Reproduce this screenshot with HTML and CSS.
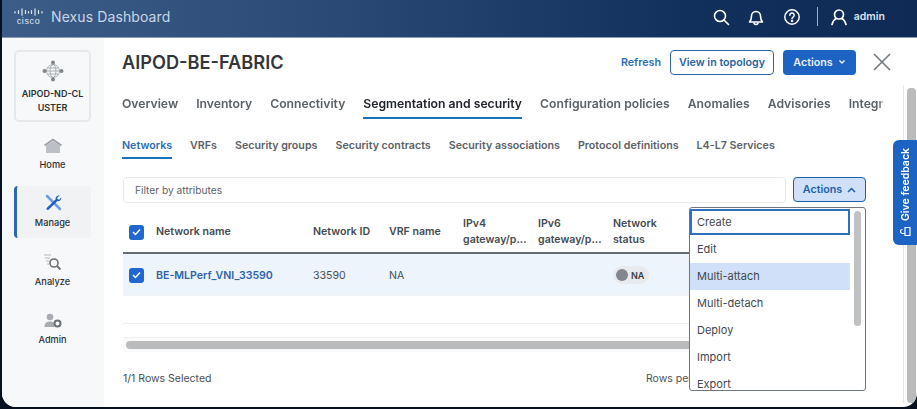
FILE: index.html
```html
<!DOCTYPE html>
<html lang="en">
<head>
<meta charset="utf-8">
<title>Nexus Dashboard</title>
<link rel="stylesheet" href="styles.css">
</head>
<body>
<div class="window">
  <header class="topbar">
    <div class="brand">
      <div class="cisco">
        <svg class="cisco-bars" width="29" height="8" viewBox="0 0 29 8"><g stroke="#dfe8f2" stroke-width="1.200" stroke-linecap="round"><path d="M1 3.500v1.500M4.500 2.500v3M8 .8v6.400M11.500 2.500v3M14.500 3.500v1.500M17.500 2.500v3M21 .8v6.400M24.500 2.500v3M28 3.500v1.500"/></g></svg>
        <span class="cisco-word">cisco</span>
      </div>
      <span class="product">Nexus Dashboard</span>
    </div>
    <div class="top-actions">
      <svg class="ti" width="18" height="18" viewBox="0 0 18 18" fill="none" stroke="#fff" stroke-width="1.600"><circle cx="8" cy="8" r="5.500"/><path d="M12 12l4.500 4.500" stroke-linecap="round"/></svg>
      <svg class="ti" width="18" height="18" viewBox="0 0 18 18" fill="none" stroke="#fff" stroke-width="1.600" stroke-linejoin="round"><path d="M2.500 14h13c-1.500-1.500-2-2.500-2-6a4.500 4.500 0 0 0-9 0c0 3.500-.5 4.500-2 6z"/><path d="M7 14.500a2 2 0 0 0 4 0"/></svg>
      <svg class="ti" width="18" height="18" viewBox="0 0 18 18" fill="none" stroke="#fff" stroke-width="1.500"><circle cx="9" cy="9" r="7.200"/><path d="M6.800 7.200a2.200 2.200 0 1 1 3.300 1.900c-.8.500-1.100.9-1.100 1.700" stroke-linecap="round"/><circle cx="9" cy="12.900" r=".5" fill="#fff"/></svg>
      <span class="divider"></span>
      <svg class="user" width="18" height="18" viewBox="0 0 18 18" fill="none" stroke="#fff" stroke-width="1.700" stroke-linecap="round"><circle cx="9" cy="6.500" r="4.500"/><path d="M2 16.500c.8-3 3-5.500 4.500-6M16 16.500c-.8-3-3-5.500-4.500-6"/></svg>
      <span class="admin">admin</span>
    </div>
  </header>
  <div class="layout">
    <nav class="sidebar">
      <div class="cluster">
        <svg width="22" height="22" viewBox="0 0 22 22" fill="none"><circle cx="11" cy="11" r="6.500" stroke="#9aa0a6" stroke-width=".8"/><ellipse cx="11" cy="11" rx="3" ry="6.500" stroke="#9aa0a6" stroke-width=".8"/><path d="M4.500 11h13M5.500 8h11M5.500 14h11" stroke="#9aa0a6" stroke-width=".8"/><g fill="#7f858b"><circle cx="11" cy="2.500" r="2"/><circle cx="11" cy="19.500" r="2"/><circle cx="2.500" cy="11" r="2"/><circle cx="19.500" cy="11" r="2"/></g></svg>
        <span class="cluster-name">AIPOD-ND-CLUSTER</span>
      </div>
      <a class="nav-item">
        <svg width="20" height="16" viewBox="0 0 20 16"><path d="M3 7.500L10 3l7 4.500V15H3z" fill="#bcc0c4"/><path d="M1.500 7.500L10 1.500l8.500 6" fill="none" stroke="#9a9fa4" stroke-width="1.600"/></svg>
        <span>Home</span>
      </a>
      <a class="nav-item active">
        <svg width="18" height="18" viewBox="0 0 18 18" fill="none"><path d="M3 2l13 13" stroke="#6e9ee0" stroke-width="2.600" stroke-linecap="round"/><path d="M15.500 1.500l-2.500 2.500.8 1.200 1.300.500 2.200-2.300c.3 2-1.500 4.200-3.800 3.700L4.500 15.800c-1 1-2.800-.600-1.800-1.700l9-8.800c-.6-2.300 1.700-4.200 3.800-3.800z" fill="#1f5fb8"/></svg>
        <span>Manage</span>
      </a>
      <a class="nav-item">
        <svg width="20" height="18" viewBox="0 0 20 18" fill="none"><path d="M1 2h7M2 5h5M3 8h3M4 11h2" stroke="#b3b7bb" stroke-width="1"/><circle cx="11" cy="10" r="4" stroke="#6b7075" stroke-width="1.600"/><path d="M14 13l3.500 3.500" stroke="#6b7075" stroke-width="1.800"/></svg>
        <span>Analyze</span>
      </a>
      <a class="nav-item">
        <svg width="20" height="16" viewBox="0 0 20 16"><circle cx="7" cy="4" r="3.300" fill="#a9adb1"/><path d="M1.500 14c0-4 2-5.500 5.500-5.500s4 1 4 2.500v3z" fill="#a9adb1"/><circle cx="14.500" cy="10.500" r="3" fill="none" stroke="#6b7075" stroke-width="2"/></svg>
        <span>Admin</span>
      </a>
    </nav>
    <main class="main">
      <div class="page-head">
        <h1>AIPOD-BE-FABRIC</h1>
        <div class="head-actions">
          <a class="link">Refresh</a>
          <button class="btn outline">View in topology</button>
          <button class="btn solid">Actions <svg width="8" height="6" viewBox="0 0 8 6" fill="none" stroke="#fff" stroke-width="1.300"><path d="M1.500 1.500L4 4l2.500-2.500"/></svg></button>
          <svg class="close" width="18" height="18" viewBox="0 0 18 18" stroke="#6f7478" stroke-width="1.500"><path d="M1 1l16 16M17 1L1 17"/></svg>
        </div>
      </div>
      <div class="tabs">
        <a>Overview</a><a>Inventory</a><a>Connectivity</a><a class="on">Segmentation and security</a><a>Configuration policies</a><a>Anomalies</a><a>Advisories</a><a>Integrations</a>
      </div>
      <div class="subtabs">
        <a class="on">Networks</a><a>VRFs</a><a>Security groups</a><a>Security contracts</a><a>Security associations</a><a>Protocol definitions</a><a>L4-L7 Services</a>
      </div>
      <div class="filter-row">
        <div class="filter">Filter by attributes</div>
        <button class="btn pressed">Actions <svg width="9" height="6" viewBox="0 0 9 6" fill="none" stroke="#1d5fa8" stroke-width="1.500"><path d="M1 5l3.500-3.500L8 5"/></svg></button>
      </div>
      <div class="table">
        <div class="tr th">
          <span class="check"><svg width="9" height="8" viewBox="0 0 9 8" fill="none" stroke="#fff" stroke-width="1.400"><path d="M1 4l2.500 2.500L8 1.500"/></svg></span>
          <span>Network name</span><span>Network ID</span><span>VRF name</span>
          <span>IPv4<br>gateway/p...</span><span>IPv6<br>gateway/p...</span><span>Network<br>status</span>
        </div>
        <div class="tr td">
          <span class="check"><svg width="9" height="8" viewBox="0 0 9 8" fill="none" stroke="#fff" stroke-width="1.400"><path d="M1 4l2.500 2.500L8 1.500"/></svg></span>
          <a class="net">BE-MLPerf_VNI_33590</a><span>33590</span><span>NA</span><span></span><span></span>
          <span><span class="pill"><i></i>NA</span></span>
        </div>
        <div class="table-end"></div>
        <div class="hscroll"><div class="hthumb"></div></div>
      </div>
      <div class="table-foot"><span>1/1 Rows Selected</span><span class="per">Rows per page</span></div>

      <div class="menu">
        <div class="menu-list">
          <div class="mi focus">Create</div>
          <div class="mi">Edit</div>
          <div class="mi hover">Multi-attach</div>
          <div class="mi">Multi-detach</div>
          <div class="mi">Deploy</div>
          <div class="mi">Import</div>
          <div class="mi">Export</div>
        </div>
        <div class="menu-track"><div class="menu-thumb"></div></div>
      </div>
      <div class="vscroll"><div class="vthumb"></div></div>
      <div class="feedback">
        <span>Give feedback</span>
        <svg width="11" height="11" viewBox="0 0 11 11" fill="none" stroke="#fff" stroke-width="1.200"><path d="M1.500 5h8v5h-8zM3.500 5V2.500a2 2 0 0 1 4 0"/></svg>
      </div>
    </main>
  </div>
</div>
</body>
</html>
```
FILE: styles.css
```css
* { box-sizing: border-box; }
html, body { margin: 0; height: 100%; }
body {
  width: 917px;
  height: 409px;
  overflow: hidden;
  background: #07101f;
  font-family: Inter, "Liberation Sans", sans-serif;
  color: #3a3f45;
}
.window {
  margin-left: 2px;
  height: 407px;
  border-radius: 0 0 14px 14px;
  overflow: hidden;
  background: #fff;
  display: flex;
  flex-direction: column;
}
.topbar {
  height: 38px;
  flex: none;
  display: flex;
  align-items: center;
  justify-content: space-between;
  padding: 0 32px 4px 12px;
  background: linear-gradient(90deg, #3d5d89 0%, #2b4a76 35%, #12305c 75%, #0e2a55 100%);
  border-bottom: 1px solid #8d9cb0;
}
.brand { display: flex; align-items: center; gap: 8px; }
.cisco { display: flex; flex-direction: column; align-items: center; width: 29px; }
.cisco-bars { display: block; }
.cisco-word { font-size: 9px; line-height: 8px; margin-top: 1px; color: #dfe8f2; font-weight: 500; letter-spacing: .6px; font-family: "Liberation Sans", sans-serif; }
.product { font-size: 14px; color: #c8d6e6; letter-spacing: .1px; }
.top-actions { display: flex; align-items: center; }
.ti { display: block; margin-right: 18px; }
.ti:first-child { margin-right: 17px; }
.divider { width: 1px; height: 19px; background: #9fb0c4; margin: 0 12px 0 -2px; }
.user { display: block; margin-right: 6px; }
.admin { color: #d9e2ec; font-size: 10.500px; font-weight: 600; }
.layout { flex: 1; display: flex; min-height: 0; }
.sidebar {
  width: 102px;
  flex: none;
  background: #f7f8f9;
  display: flex;
  flex-direction: column;
  padding: 12px 0 0 12px;
}
.cluster {
  width: 77px;
  height: 72px;
  border: 2px solid #e6e8ea;
  border-radius: 5px;
  display: flex;
  flex-direction: column;
  align-items: center;
  padding-top: 8px;
}
.cluster-name {
  width: 66px;
  margin-top: 5px;
  font-size: 9px;
  line-height: 14px;
  font-weight: 600;
  text-align: center;
  word-break: break-all;
  color: #2c3136;
}
.nav-item {
  width: 77px;
  height: 52px;
  margin-top: 6px;
  padding-bottom: 2px;
  display: flex;
  flex-direction: column;
  align-items: center;
  justify-content: center;
  gap: 4px;
  font-size: 9.200px;
  font-weight: 500;
  color: #2c3136;
  border-radius: 4px;
  line-height: 13px;
}
.nav-item:nth-of-type(1) { margin-top: 7px; }
.nav-item:last-child { margin-top: 7px; }
.nav-item svg { display: block; }
.nav-item.active { background: #f0f2f4; border-left: 3px solid #2c66b4; padding-right: 3px; margin-top: 5px; }
.nav-item.active + .nav-item { margin-top: 7px; }
.main {
  flex: 1;
  min-width: 0;
  position: relative;
  padding: 11px 0 0 18px;
}
.page-head {
  width: 769px;
  height: 26px;
  display: flex;
  align-items: center;
  justify-content: space-between;
}
h1 { margin: 0; font-size: 18.200px; font-weight: 600; color: #33373c; }
.head-actions { display: flex; align-items: center; }
.link { font-size: 10.700px; font-weight: 600; color: #2a6cb8; margin-right: 9px; }
.btn {
  font-family: inherit;
  font-size: 10.700px;
  font-weight: 600;
  height: 25px;
  border-radius: 4px;
  padding: 0;
  display: inline-flex;
  align-items: center;
  justify-content: center;
  gap: 5px;
}
.outline { width: 104px; background: #fff; border: 1.500px solid #2b64a8; color: #2a62a5; margin-right: 9px; }
.solid { width: 73px; background: #1d63c4; border: 0; color: #e8f0fb; margin-right: 17px; }
.close { display: block; }
.tabs {
  margin-top: 21px;
  width: 763px;
  display: flex;
  gap: 18px;
  overflow: hidden;
  white-space: nowrap;
  font-size: 12.200px;
  font-weight: 600;
  line-height: 16px;
  color: #5b6168;
  mask-image: linear-gradient(90deg, #000 757px, transparent 763px);
  -webkit-mask-image: linear-gradient(90deg, #000 757px, transparent 763px);
}
.tabs a { padding-bottom: 5px; border-bottom: 2px solid transparent; flex: none; }
.tabs a.on { color: #202429; border-bottom-color: #1a72bd; }
.subtabs {
  margin-top: 19px;
  display: flex;
  gap: 18px;
  font-size: 10.700px;
  font-weight: 600;
  line-height: 16px;
  color: #5b6168;
  white-space: nowrap;
}
.subtabs a { padding-bottom: 3px; border-bottom: 2px solid transparent; }
.subtabs a.on { color: #2a6cb8; border-bottom-color: #1a72bd; }
.filter-row { margin: 18px 0 0 1px; display: flex; gap: 7px; width: 743px; }
.filter {
  flex: 1;
  height: 26px;
  border: 1px solid #e8e9eb;
  border-radius: 4px;
  padding-left: 11px;
  font-size: 10.200px;
  line-height: 24px;
  color: #5d6369;
}
.pressed { width: 73px; background: #cfe0f8; border: 1.500px solid #1d5fa8; color: #1d5fa8; }
.table { margin: 4px 0 0 1px; width: 743px; overflow: hidden; }
.tr {
  display: grid;
  grid-template-columns: 33px 157px 76px 74px 75px 75px 1fr;
  align-items: center;
  font-size: 10.600px;
}
.th { height: 47px; padding-top: 5px; border-bottom: 2px solid #666c73; font-weight: 600; color: #464b51; line-height: 16px; }
.td { height: 42px; padding-top: 1px; background: #edf4fc; border-bottom: 1px solid #f0f1f3; color: #4a4f55; }
.check {
  width: 15px;
  height: 15px;
  margin-left: 6px;
  background: #2068d0;
  border-radius: 3px;
  display: flex;
  align-items: center;
  justify-content: center;
}
.net { color: #2e64ad; font-weight: 600; }
.pill {
  display: inline-flex;
  align-items: center;
  gap: 3px;
  height: 18px;
  padding: 0 5px 0 3px;
  border-radius: 9px;
  background: #e8eaed;
  font-size: 9px;
  font-weight: 600;
  color: #3a3f45;
}
.pill i { width: 12px; height: 12px; border-radius: 50%; background: #83878d; }
.table-end { height: 28px; border-bottom: 1px solid #eceef0; }
.hscroll { margin-top: 13px; height: 15px; background: #fafafa; padding: 3px; border-top: 1px solid #f0f0f0; }
.hthumb { height: 8px; border-radius: 4px; background: #b9bbbd; }
.table-foot {
  margin: 18px 0 0 1px;
  width: 600px;
  display: flex;
  justify-content: space-between;
  font-size: 10.500px;
  line-height: 17px;
  color: #4a4f55;
  white-space: nowrap;
}
.per { width: 77px; }
.menu {
  position: absolute;
  left: 585px;
  top: 169px;
  width: 177px;
  height: 184px;
  display: flex;
  background: #fff;
  border: 1px solid #6f767d;
  border-radius: 3px;
  overflow: hidden;
  padding-top: 1px;
}
.menu-list { width: 160px; flex: none; }
.mi {
  height: 27px;
  padding: 0 7px;
  font-size: 11px;
  line-height: 27px;
  color: #43484e;
}
.mi.focus { border: 2px solid #2d6fc4; padding: 0 5px; line-height: 23px; height: 26px; margin-bottom: 1px; }
.mi.hover { background: #cfe0f8; }
.menu-track { flex: 1; padding: 2px 0 0 4px; }
.menu-thumb { width: 7px; height: 115px; border-radius: 4px; background: #bfc1c3; }
.vscroll {
  position: absolute;
  right: 0;
  top: 47px;
  bottom: 4px;
  width: 14px;
  border-left: 1px solid #e7e8ea;
  padding: 3px 2px 0 3px;
}
.vthumb { height: 100%; width: 9px; border-radius: 4px; background: #b9bbbd; }
.feedback {
  position: absolute;
  right: 0;
  top: 102px;
  width: 24px;
  height: 105px;
  background: #1d63c4;
  border-radius: 6px 0 0 6px;
  display: flex;
  flex-direction: column;
  align-items: center;
  justify-content: center;
  gap: 4px;
  color: #fff;
  font-size: 10.500px;
  font-weight: 600;
}
.feedback span { writing-mode: vertical-rl; transform: rotate(180deg); white-space: nowrap; }
.feedback svg { display: block; transform: rotate(-90deg); }
```
